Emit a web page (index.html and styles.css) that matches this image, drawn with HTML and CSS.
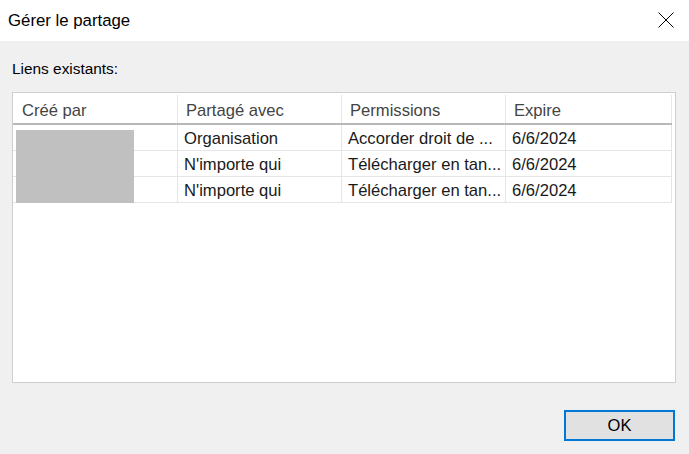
FILE: index.html
```html
<!DOCTYPE html>
<html lang="fr">
<head>
	<meta charset="UTF-8">
	<title>Gérer le partage</title>
	<link rel="stylesheet" href="styles.css">
</head>
<body>
	<div class="dialog">
		<div class="titlebar">
			<div class="caption">Gérer le partage</div>
			<div class="close">
				<svg width="16" height="16" viewBox="0 0 16 16">
					<path d="M0.5 0.5L15.5 15.5M15.5 0.5L0.5 15.5" stroke="#000" stroke-width="1" fill="none"/>
				</svg>
			</div>
		</div>
		<div class="content">
			<div class="label">Liens existants:</div>
			<div class="list">
				<div class="row head">
					<div class="cell">Créé par</div>
					<div class="cell">Partagé avec</div>
					<div class="cell">Permissions</div>
					<div class="cell">Expire</div>
				</div>
				<div class="row">
					<div class="cell"></div>
					<div class="cell">Organisation</div>
					<div class="cell">Accorder droit de ...</div>
					<div class="cell">6/6/2024</div>
				</div>
				<div class="row">
					<div class="cell"></div>
					<div class="cell">N'importe qui</div>
					<div class="cell">Télécharger en tan...</div>
					<div class="cell">6/6/2024</div>
				</div>
				<div class="row">
					<div class="cell"></div>
					<div class="cell">N'importe qui</div>
					<div class="cell">Télécharger en tan...</div>
					<div class="cell">6/6/2024</div>
				</div>
				<!-- nom masqué -->
				<div class="mask"></div>
			</div>
			<div class="buttons">
				<div class="btn">OK</div>
			</div>
		</div>
	</div>
</body>
</html>
```

FILE: styles.css
```css
*{padding:0;margin:0;box-sizing:border-box;}
body{
	background:#f0f0f0;
	font-family:"Liberation Sans", Arial, sans-serif;
	color:#1a1a1a;
}
.dialog{
	width:689px;
	height:454px;
	display:flex;
	flex-direction:column;
}
.titlebar{
	height:41px;
	background:#fff;
	display:flex;
	align-items:center;
	justify-content:space-between;
	padding:0 15px 0 8px;
}
.caption{
	font-size:16.8px;
	color:#000;
}
.close{
	display:flex;
	margin-top:-2px;
}
.content{
	padding:0 13px 0 12px;
	flex:1;
	display:flex;
	flex-direction:column;
}
.label{
	margin-top:18px;
	font-size:15.4px;
	line-height:20px;
	color:#000;
}
.list{
	position:relative;
	margin-top:13px;
	height:291px;
	background:#fff;
	border:1px solid #cfcfcf;
	padding:2px 3px 0 0;
}
.row{
	display:grid;
	grid-template-columns:165px 164px 164px 166px;
	height:26px;
	border-bottom:1px solid #e5e5e5;
}
.row .cell{
	border-right:1px solid #e5e5e5;
	font-size:16.6px;
	line-height:27px;
	padding-left:6px;
	white-space:nowrap;
	overflow:hidden;
}
.row.head{
	height:30px;
	border-bottom:2px solid #b8b8b8;
}
.row.head .cell{
	color:#444;
	line-height:31px;
	padding-left:8px;
	border-right-color:#e8e8e8;
}
.row.head .cell:first-child{
	padding-left:9px;
}
.mask{
	position:absolute;
	left:3px;
	top:37px;
	width:118px;
	height:73px;
	background:#c0c0c0;
}
.buttons{
	display:flex;
	justify-content:flex-end;
	margin-top:27px;
	margin-right:1px;
}
.btn{
	width:111px;
	height:31px;
	border:2px solid #0078d7;
	background:#e1e1e1;
	font-size:16.5px;
	line-height:27px;
	text-align:center;
	color:#000;
}
```
